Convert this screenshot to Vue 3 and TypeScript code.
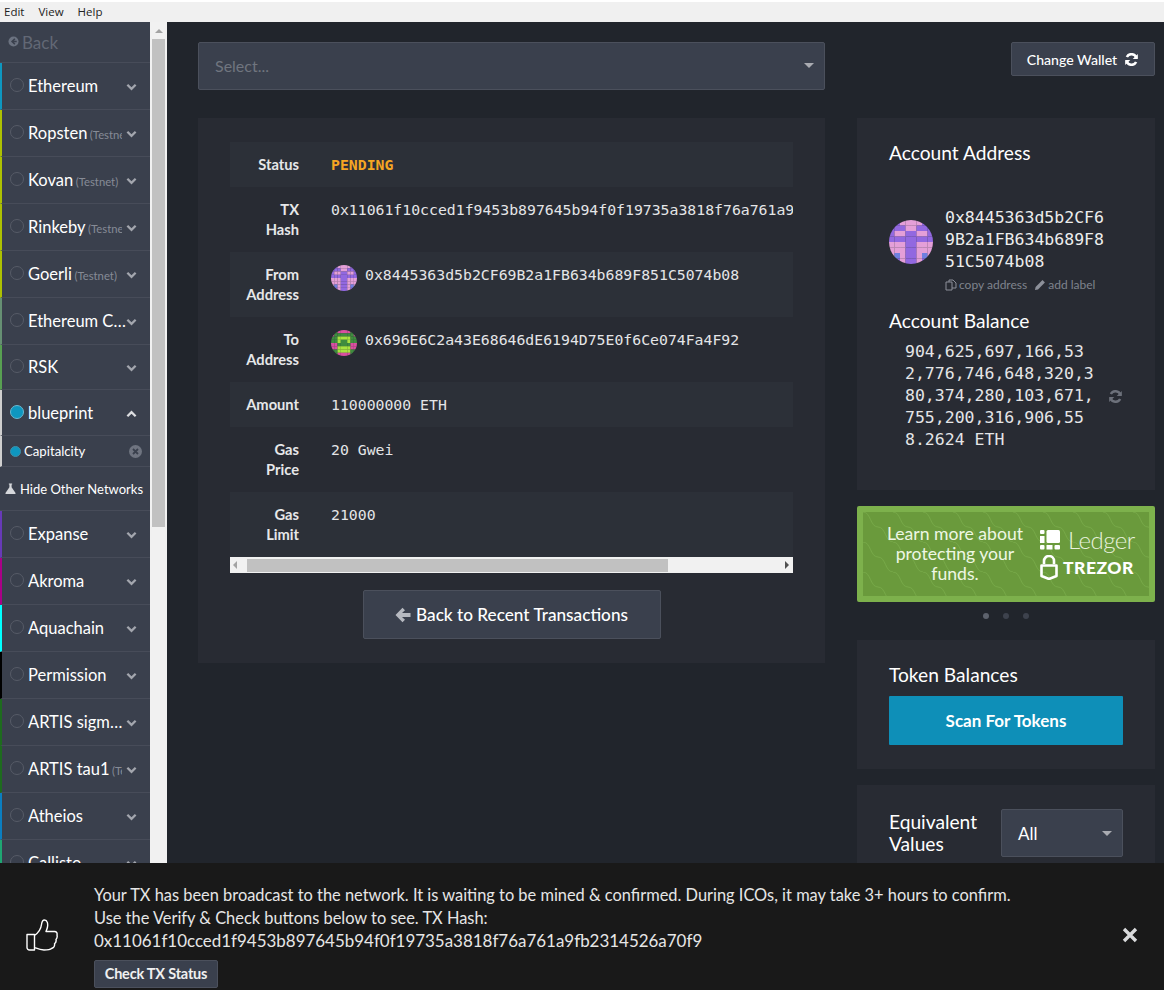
<script setup lang="ts">
interface Network { name: string; color: string; tag?: string; short?: boolean }

const topNetworks: Network[] = [
  { name: 'Ethereum', color: '#0e97c0' },
  { name: 'Ropsten', color: '#adc101', tag: '(Testnet)' },
  { name: 'Kovan', color: '#adc101', tag: '(Testnet)' },
  { name: 'Rinkeby', color: '#adc101', tag: '(Testnet)' },
  { name: 'Goerli', color: '#adc101', tag: '(Testnet)' },
  { name: 'Ethereum Classic', color: '#669073' },
  { name: 'RSK', color: '#58a052', short: true },
]

const otherNetworks: Network[] = [
  { name: 'Expanse', color: '#673ab7' },
  { name: 'Akroma', color: '#aa0087' },
  { name: 'Aquachain', color: '#00ffff' },
  { name: 'Permission', color: '#000000' },
  { name: 'ARTIS sigma1', color: '#1e6b1e' },
  { name: 'ARTIS tau1', color: '#1e6b1e', tag: '(Testnet)' },
  { name: 'Atheios', color: '#0b7ec0' },
  { name: 'Callisto', color: '#1fa672' },
]

const txRows = [
  { label: ['TX', 'Hash'], value: '0x11061f10cced1f9453b897645b94f0f19735a3818f76a761a9fb2314526a70f9' },
]

// 8x8 blockies: 0 = background, 1 = first colour, 2 = spot
const fromCells = [
  '00111100',
  '00011000',
  '01100110',
  '00000000',
  '11100111',
  '11100111',
  '12100121',
  '00100100',
]
const toCells = [
  '00111100',
  '10000001',
  '00222200',
  '00200200',
  '11000011',
  '11222211',
  '00222200',
  '00111100',
]

function cells(rows: string[]) {
  const out: { x: number; y: number; v: string }[] = []
  rows.forEach((row, y) => row.split('').forEach((v, x) => out.push({ x, y, v })))
  return out
}
const fromBlocks = cells(fromCells)
const toBlocks = cells(toCells)

const fromColors: Record<string, string> = { '0': '#9268e0', '1': '#e49fd8', '2': '#6f7fe0' }
const toColors: Record<string, string> = { '0': '#3f8c3f', '1': '#d94fa0', '2': '#a8e33f' }
</script>

<template>
  <div class="window">
    <div class="menubar">
      <span>Edit</span><span>View</span><span>Help</span>
    </div>

    <div class="page">
      <aside class="sidebar">
        <div class="back">
          <svg class="back-icon" viewBox="0 0 12 12"><circle cx="6" cy="6" r="5.5" fill="#6b7280" /><path d="M7.5 3 4.5 6l3 3M4.5 6h5" stroke="#3a404d" stroke-width="1.8" fill="none" /></svg>
          Back
        </div>
        <div v-for="n in topNetworks" :key="n.name" class="net" :class="{ short: n.short }" :style="{ borderLeftColor: n.color }">
          <span class="radio"></span>
          <span class="net-name" :class="{ tagged: n.tag }">{{ n.name }}<small v-if="n.tag">{{ n.tag }}</small></span>
          <svg class="chev" viewBox="0 0 12 8"><path d="M1.5 1.5 6 6l4.5-4.5" /></svg>
        </div>
        <div class="net active" style="border-left-color: #cfcfcf">
          <span class="radio on"></span>
          <span class="net-name">blueprint</span>
          <svg class="chev" viewBox="0 0 12 8"><path d="M1.5 6.5 6 2l4.5 4.5" /></svg>
        </div>
        <div class="node" style="border-left-color: #cfcfcf">
          <span class="dot"></span>
          <span class="node-name">Capitalcity</span>
          <svg class="node-x" viewBox="0 0 13 13"><circle cx="6.5" cy="6.5" r="6.5" fill="#6f7480" /><path d="M4 4l5 5M9 4l-5 5" stroke="#3a404d" stroke-width="1.8" /></svg>
        </div>
        <div class="hide-others">
          <svg class="flask" viewBox="0 0 12 12"><path d="M4.2 0.5h3.6v1H7.2v3L11.5 11a.7.7 0 0 1-.6 1H1.1a.7.7 0 0 1-.6-1l4.3-6.5V1.5h-.6z" fill="#d5d7db" /></svg>
          Hide Other Networks
        </div>
        <div v-for="n in otherNetworks" :key="n.name" class="net" :style="{ borderLeftColor: n.color }">
          <span class="radio"></span>
          <span class="net-name" :class="{ tagged: n.tag }">{{ n.name }}<small v-if="n.tag">{{ n.tag }}</small></span>
          <svg class="chev" viewBox="0 0 12 8"><path d="M1.5 1.5 6 6l4.5-4.5" /></svg>
        </div>
      </aside>

      <div class="vscroll">
        <span class="arrow-up"></span>
        <span class="vthumb"></span>
      </div>

      <main class="main">
        <div class="top">
          <div class="select">
            <span>Select...</span>
            <span class="caret"></span>
          </div>
          <button class="change-wallet">
            Change Wallet
            <svg class="refresh" viewBox="0 0 16 14"><path d="M13.3 5.2A5.6 5.6 0 0 0 3 4.3M2.7 8.8A5.6 5.6 0 0 0 13 9.7" fill="none" stroke="#fff" stroke-width="2.8" /><path d="M14.8 1v5.5H9.3zM1.2 13V7.5h5.5z" fill="#fff" /></svg>
          </button>
        </div>

        <div class="columns">
          <section class="panel tx">
            <div class="table-wrap">
              <div class="row striped">
                <div class="label">Status</div>
                <div class="value pending">PENDING</div>
              </div>
              <div v-for="r in txRows" :key="r.value" class="row tall">
                <div class="label">{{ r.label[0] }}<br />{{ r.label[1] }}</div>
                <div class="value">{{ r.value }}</div>
              </div>
              <div class="row tall striped">
                <div class="label">From<br />Address</div>
                <div class="value addr">
                  <svg class="blockie small" viewBox="0 0 8 8"><rect v-for="(b, i) in fromBlocks" :key="i" :x="b.x" :y="b.y" width="1.02" height="1.02" :fill="fromColors[b.v]" /></svg>
                  0x8445363d5b2CF69B2a1FB634b689F851C5074b08
                </div>
              </div>
              <div class="row tall">
                <div class="label">To<br />Address</div>
                <div class="value addr">
                  <svg class="blockie small" viewBox="0 0 8 8"><rect v-for="(b, i) in toBlocks" :key="i" :x="b.x" :y="b.y" width="1.02" height="1.02" :fill="toColors[b.v]" /></svg>
                  0x696E6C2a43E68646dE6194D75E0f6Ce074Fa4F92
                </div>
              </div>
              <div class="row striped">
                <div class="label">Amount</div>
                <div class="value">110000000 ETH</div>
              </div>
              <div class="row tall">
                <div class="label">Gas<br />Price</div>
                <div class="value">20 Gwei</div>
              </div>
              <div class="row tall striped">
                <div class="label">Gas<br />Limit</div>
                <div class="value">21000</div>
              </div>
              <div class="hscroll">
                <span class="arrow-left"></span>
                <span class="hthumb"></span>
                <span class="arrow-right"></span>
              </div>
            </div>
            <button class="back-btn">
              <svg class="arrow" viewBox="0 0 16 16"><path d="M7.5 0.8 10 3.3 7 6H15.5V10H7L10 12.7 7.5 15.200 0.500 8z" fill="#b6b9c0" /></svg>
              Back to Recent Transactions
            </button>
          </section>

          <div class="side">
            <section class="panel account">
              <h3>Account Address</h3>
              <div class="addr-block">
                <svg class="blockie large" viewBox="0 0 8 8"><rect v-for="(b, i) in fromBlocks" :key="i" :x="b.x" :y="b.y" width="1.02" height="1.02" :fill="fromColors[b.v]" /></svg>
                <div>
                  <div class="mono-addr">0x8445363d5b2CF69B2a1FB634b689F851C5074b08</div>
                  <div class="addr-actions">
                    <svg viewBox="0 0 12 12"><path d="M1 3h6v8H1zM4 3V1h4l3 3v5H7" fill="none" stroke="#8c909a" stroke-width="1" /></svg>
                    copy address
                    <svg viewBox="0 0 12 12" class="pen"><path d="M1 11l.6-3L8.5 1.1l2.4 2.4L4 10.4z" fill="#8c909a" /></svg>
                    add label
                  </div>
                </div>
              </div>
              <h3 class="balance-title">Account Balance</h3>
              <div class="balance">
                <div class="mono-balance">904,625,697,166,532,776,746,648,320,380,374,280,103,671,755,200,316,906,558.2624 ETH</div>
                <svg class="refresh-dim" viewBox="0 0 16 14"><path d="M13.3 5.2A5.6 5.6 0 0 0 3 4.3M2.7 8.8A5.6 5.6 0 0 0 13 9.7" fill="none" stroke="#6d717b" stroke-width="2.6" /><path d="M14.8 1v5.5H9.3zM1.2 13V7.5h5.5z" fill="#6d717b" /></svg>
              </div>
            </section>

            <div class="promo">
              <svg class="waves" width="100%" height="100%">
                <defs>
                  <pattern id="wave" width="30" height="30" patternUnits="userSpaceOnUse">
                    <path d="M0 0C8 0 7 15 15 15S22 30 30 30" fill="none" stroke="#76a847" stroke-width="1" />
                  </pattern>
                </defs>
                <rect width="100%" height="100%" fill="url(#wave)" />
              </svg>
              <div class="promo-text">Learn more about protecting your funds.</div>
              <div class="promo-logos">
                <div class="logo-row">
                  <svg class="ledger-mark" viewBox="0 0 20 20">
                    <rect x="0" y="0" width="4.5" height="4" rx="1" />
                    <rect x="0" y="6" width="4.5" height="7" />
                    <rect x="0" y="15" width="4.5" height="4.5" rx="1" />
                    <rect x="6.5" y="0" width="13.5" height="13" rx="1.5" />
                    <rect x="6.5" y="15" width="6" height="4.5" />
                    <rect x="14.5" y="15" width="5.5" height="4.5" rx="1" />
                  </svg>
                  <span class="ledger-word">Ledger</span>
                </div>
                <div class="logo-row trezor">
                  <svg class="lock" viewBox="0 0 18 25">
                    <path d="M4 9V6a5 5 0 0 1 10 0v3" fill="none" stroke="#fff" stroke-width="2.6" />
                    <path d="M1.5 10.5h15V21L9 24 1.5 21z" fill="none" stroke="#fff" stroke-width="2.6" stroke-linejoin="round" />
                  </svg>
                  <span class="trezor-word">TREZOR</span>
                </div>
              </div>
            </div>
            <div class="dots"><span class="on"></span><span></span><span></span></div>

            <section class="panel tokens">
              <h3>Token Balances</h3>
              <button class="scan">Scan For Tokens</button>
            </section>

            <section class="panel equiv">
              <h3>Equivalent<br />Values</h3>
              <div class="all-select"><span>All</span><span class="caret"></span></div>
            </section>
          </div>
        </div>
      </main>
    </div>

    <div class="notice">
      <svg class="thumb" viewBox="0 0 32 32">
        <path d="M1 15.5h7.5V31H3.5A2.5 2.5 0 0 1 1 28.5zM8.5 16.5C12 14 15 10 15.5 5.5 15.8 3 16.5 1 18.5 1 21.5 1 22 5 21.5 8 21 10.5 20 12 20 12.5H28.5C30.5 12.5 31.5 14 31 16 31.5 18 31 19.5 30 20.5 30.5 22.5 29.5 24 28.5 24.800 29 27 27.5 29 25.5 29.500 24 31 21 31 18 31 14 31 11 29.500 8.5 28.500" fill="none" stroke="#fff" stroke-width="1.4" stroke-linejoin="round" />
      </svg>
      <div class="notice-body">
        <div>Your TX has been broadcast to the network. It is waiting to be mined &amp; confirmed. During ICOs, it may take 3+ hours to confirm.</div>
        <div>Use the Verify &amp; Check buttons below to see. TX Hash:</div>
        <div class="notice-hash">0x11061f10cced1f9453b897645b94f0f19735a3818f76a761a9fb2314526a70f9</div>
        <button class="check-btn">Check TX Status</button>
      </div>
      <svg class="close" viewBox="0 0 16 16"><path d="M2 2l12 12M14 2 2 14" stroke="#d9dadc" stroke-width="3.4" /></svg>
    </div>
  </div>
</template>

<style>
html, body {
  margin: 0;
  background: #21252c;
}
</style>

<style scoped>
.window {
  position: relative;
  width: 1164px;
  height: 990px;
  overflow: hidden;
  font-family: Lato, "Liberation Sans", sans-serif;
  color: #fff;
  background: #21252c;
}

.menubar {
  height: 22px;
  background: linear-gradient(#fff 0, #fff 2px, #f0f0f0 2px);
  color: #222;
  font: 11.5px "Open Sans", sans-serif;
  display: flex;
  align-items: center;
  gap: 14px;
  padding: 1px 0 0 4px;
  box-sizing: border-box;
}

.page {
  display: flex;
  height: 968px;
}

/* sidebar */
.sidebar {
  width: 150px;
  flex: none;
  background: #3a404d;
  overflow: hidden;
}

.back {
  height: 41px;
  box-sizing: border-box;
  padding: 11px 0 0 8px;
  color: #626875;
  font-size: 17px;
  line-height: 20px;
  border-bottom: 1px solid #474c59;
  display: flex;
  align-items: flex-start;
  gap: 3px;
}

.back-icon {
  width: 11px;
  height: 11px;
  margin-top: 3px;
}

.net {
  height: 47px;
  box-sizing: border-box;
  border-left: 2px solid;
  border-bottom: 1px solid #474c59;
  display: flex;
  align-items: center;
  padding-left: 8px;
  position: relative;
}

.net.short {
  height: 45px;
}

.net.active {
  height: 46px;
}

.radio {
  width: 12px;
  height: 12px;
  border: 1px solid #565b67;
  border-radius: 50%;
  flex: none;
  margin-right: 4px;
  margin-top: -2px;
}

.radio.on {
  background: #0e97c0;
  border-color: #6cb8d0;
}

.net-name {
  font-size: 16.5px;
  width: 99px;
  white-space: nowrap;
  overflow: hidden;
  text-overflow: ellipsis;
}

.net-name.tagged {
  width: 94px;
  text-overflow: clip;
}

.net-name small {
  font-size: 11.3px;
  color: #868b96;
  margin-left: 2.5px;
}

.chev {
  position: absolute;
  right: 13px;
  top: calc(50% - 3px);
  width: 11px;
  height: 8px;
  fill: none;
  stroke: #a3a6ae;
  stroke-width: 2.5;
}

.net.active .chev {
  stroke: #dcdde0;
}

.node {
  height: 31px;
  box-sizing: border-box;
  border-left: 2px solid;
  border-bottom: 1px solid #474c59;
  display: flex;
  align-items: center;
  padding-left: 8px;
  position: relative;
}

.dot {
  width: 9px;
  height: 9px;
  background: #0e97c0;
  border-radius: 50%;
  border: 1px solid #3f8fa8;
  margin-right: 3px;
}

.node-name {
  font-size: 13.2px;
}

.node-x {
  position: absolute;
  right: 8px;
  top: 9px;
  width: 13px;
  height: 13px;
}

.hide-others {
  height: 44px;
  box-sizing: border-box;
  border-bottom: 1px solid #474c59;
  display: flex;
  align-items: center;
  gap: 4px;
  padding-left: 5px;
  font-size: 13px;
  white-space: nowrap;
}

.flask {
  width: 11px;
  height: 11px;
}

/* page scrollbar */
.vscroll {
  width: 17px;
  flex: none;
  background: #f1f1f1;
  position: relative;
}

.vthumb {
  position: absolute;
  left: 2px;
  right: 2px;
  top: 17px;
  height: 488px;
  background: #c1c1c1;
}

.arrow-up {
  position: absolute;
  left: 5px;
  top: 7px;
  border: 4px solid transparent;
  border-top: 0;
  border-bottom: 4px solid #a3a3a3;
}

/* main area */
.main {
  flex: 1;
  min-width: 0;
  padding: 20px 9px 0 31px;
  overflow: hidden;
}

.top {
  display: flex;
  align-items: flex-start;
  justify-content: space-between;
  margin-bottom: 28px;
}

.select {
  width: 627px;
  height: 48px;
  box-sizing: border-box;
  background: #3a404d;
  border: 1px solid #4b505c;
  border-radius: 2px;
  display: flex;
  align-items: center;
  justify-content: space-between;
  padding: 0 10px 2px 16px;
  font-size: 16px;
  color: #70757f;
}

.caret {
  border: 5px solid transparent;
  border-bottom: 0;
  border-top: 5px solid #a9abb1;
}

.change-wallet {
  width: 144px;
  height: 34px;
  background: #3a404d;
  border: 1px solid #4b505c;
  border-radius: 2px;
  color: #fff;
  font: 500 14.1px Lato, sans-serif;
  display: flex;
  align-items: center;
  justify-content: center;
  gap: 7px;
  padding: 0;
}

.refresh {
  width: 15px;
  height: 13px;
}

.columns {
  display: flex;
  justify-content: space-between;
  align-items: flex-start;
}

.panel {
  background: #282b33;
  box-sizing: border-box;
}

.panel h3 {
  margin: 0;
  font-size: 19.2px;
  font-weight: 400;
  line-height: 23px;
}

.tx {
  width: 627px;
  height: 545px;
  padding: 24px 32px 0;
  display: flex;
  flex-direction: column;
  align-items: center;
}

.table-wrap {
  width: 563px;
  overflow: hidden;
}

.row {
  display: flex;
  height: 45px;
  padding-top: 13px;
  box-sizing: border-box;
  font-size: 14.7px;
  line-height: 20px;
  white-space: nowrap;
}

.row.tall {
  height: 65px;
}

.row.striped {
  background: #2c3038;
}

.label {
  width: 69px;
  flex: none;
  margin-top: -1px;
  text-align: right;
  font-weight: 700;
  color: #e6e7e9;
}

.value {
  margin-left: 32px;
  font-family: "DejaVu Sans Mono", "Liberation Mono", monospace;
  font-size: 14.8px;
  color: #e4e5e7;
}

.value.pending {
  color: #f5a623;
  font-weight: 700;
}

.addr {
  display: flex;
  gap: 8px;
  align-items: flex-start;
}

.blockie {
  border-radius: 50%;
  flex: none;
  display: block;
}

.blockie.small {
  width: 26px;
  height: 26px;
}

.blockie.large {
  width: 44px;
  height: 44px;
  margin-top: 13px;
}

.hscroll {
  height: 16px;
  background: #f1f1f1;
  position: relative;
}

.hthumb {
  position: absolute;
  left: 17px;
  top: 2px;
  height: 13px;
  width: 421px;
  background: #c1c1c1;
}

.arrow-left,
.arrow-right {
  position: absolute;
  top: 4px;
  border: 4px solid transparent;
}

.arrow-left {
  left: 3px;
  border-left: 0;
  border-right: 4px solid #a3a3a3;
}

.arrow-right {
  right: 4px;
  border-right: 0;
  border-left: 4px solid #505050;
}

.back-btn {
  margin-top: 17px;
  width: 298px;
  height: 49px;
  background: #3a404d;
  border: 1px solid #4b505c;
  border-radius: 2px;
  color: #fff;
  font: 500 17.2px Lato, sans-serif;
  display: flex;
  align-items: center;
  justify-content: center;
  gap: 5px;
  padding: 0;
}

.arrow {
  width: 16px;
  height: 16px;
}

.side {
  width: 298px;
  flex: none;
}

.account {
  height: 372px;
  padding: 23px 32px 0;
}

.addr-block {
  display: flex;
  gap: 12px;
  margin-top: 43px;
}

.mono-addr {
  width: 162px;
  font-family: "DejaVu Sans Mono", "Liberation Mono", monospace;
  font-size: 16.5px;
  line-height: 22px;
  word-break: break-all;
  color: #eceded;
}

.addr-actions {
  display: flex;
  align-items: center;
  margin-top: 5px;
  font-size: 12px;
  line-height: 14px;
  color: #7f838d;
  white-space: nowrap;
}

.addr-actions svg {
  width: 12px;
  height: 12px;
  margin-right: 2px;
}

.addr-actions .pen {
  margin-left: 7px;
}

.panel .balance-title {
  margin-top: 17px;
}

.balance {
  display: flex;
  align-items: center;
  padding-left: 16px;
  margin-top: 9px;
}

.mono-balance {
  width: 190px;
  font-family: "DejaVu Sans Mono", "Liberation Mono", monospace;
  font-size: 16.5px;
  line-height: 22px;
  word-break: break-all;
  color: #e4e5e7;
}

.refresh-dim {
  width: 15px;
  height: 13px;
  margin-left: 13px;
}

.promo {
  position: relative;
  margin-top: 16px;
  height: 96px;
  box-sizing: border-box;
  background: #6a9a3c;
  border: 6px solid #7db14c;
  border-radius: 2px;
  display: flex;
  align-items: center;
  padding-left: 17px;
  overflow: hidden;
}

.waves {
  position: absolute;
  inset: 0;
}

.promo-text {
  position: relative;
  width: 150px;
  text-align: center;
  font-size: 17.6px;
  line-height: 20px;
  color: #eef7e4;
}

.promo-logos {
  position: relative;
  margin: -3px 0 0 10px;
  width: 100px;
}

.logo-row {
  display: flex;
  align-items: center;
  gap: 8px;
}

.ledger-mark {
  width: 20px;
  height: 20px;
  fill: #fff;
}

.ledger-word {
  font-size: 24px;
  font-weight: 300;
  line-height: 30px;
  color: #e8f2de;
  letter-spacing: -0.5px;
}

.trezor {
  gap: 5px;
}

.lock {
  width: 18px;
  height: 25px;
}

.trezor-word {
  font-size: 17.5px;
  font-weight: 900;
  letter-spacing: 0.5px;
}

.dots {
  height: 38px;
  box-sizing: border-box;
  padding-bottom: 10px;
  display: flex;
  justify-content: center;
  align-items: center;
  gap: 14px;
}

.dots span {
  width: 6px;
  height: 6px;
  border-radius: 50%;
  background: #3d424d;
}

.dots span.on {
  background: #5d626d;
}

.tokens {
  height: 129px;
  padding: 23px 32px 0;
}

.scan {
  display: block;
  width: 234px;
  height: 49px;
  margin-top: 10px;
  background: #0e8fb8;
  border: none;
  border-radius: 1px;
  color: #fff;
  font: 700 17px Lato, sans-serif;
}

.equiv {
  margin-top: 16px;
  height: 120px;
  padding: 24px 32px 0;
  display: flex;
  justify-content: space-between;
  align-items: flex-start;
}

.equiv h3 {
  line-height: 22px;
  margin-top: 2px;
}

.all-select {
  width: 122px;
  height: 48px;
  box-sizing: border-box;
  background: #3a404d;
  border: 1px solid #4b505c;
  border-radius: 2px;
  display: flex;
  align-items: center;
  justify-content: space-between;
  padding: 1px 10px 0 16px;
  font-size: 17px;
}

/* bottom notification, sits over the page */
.notice {
  position: absolute;
  left: 0;
  right: 0;
  bottom: 0;
  height: 127px;
  box-sizing: border-box;
  background: #191919;
  display: flex;
  align-items: center;
  padding: 0 0 0 26px;
}

.thumb {
  width: 32px;
  height: 32px;
  flex: none;
  margin-top: 17px;
}

.notice-body {
  margin-left: 36px;
  padding-top: 20px;
  align-self: flex-start;
  font-size: 16.4px;
  line-height: 23px;
  color: #e6e6e6;
  white-space: nowrap;
}

.notice-hash {
  font-size: 16.95px;
}

.check-btn {
  display: block;
  margin-top: 8px;
  width: 124px;
  height: 28px;
  padding: 0 0 1px;
  background: #3a404d;
  border: 1px solid #4b505c;
  border-radius: 2px;
  color: #f0f0f0;
  font: 700 14.5px Lato, sans-serif;
  letter-spacing: -0.2px;
}

.close {
  position: absolute;
  right: 26px;
  top: 64px;
  width: 16px;
  height: 16px;
}
</style>
